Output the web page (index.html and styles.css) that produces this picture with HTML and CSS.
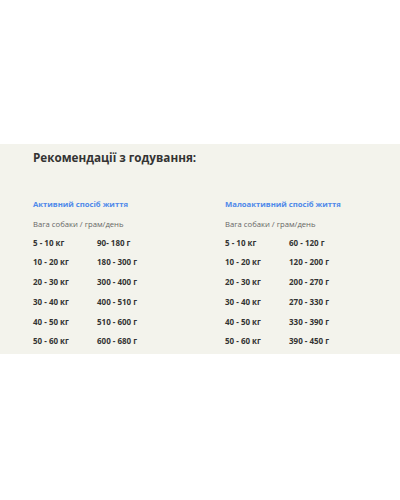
FILE: index.html
```html
<!DOCTYPE html>
<html>
<head>
<meta charset="utf-8">
<link rel="stylesheet" href="styles.css">
</head>
<body>
<div class="top"></div>
<section class="panel">
  <h2 class="title">Рекомендації з годування:</h2>
  <div class="cols">
    <div class="col">
      <div class="head">Активний спосіб життя</div>
      <div class="sub">Вага собаки / грам/день</div>
      <div class="row"><span class="w">5 - 10 кг</span><span>90- 180 г</span></div>
      <div class="row"><span class="w">10 - 20 кг</span><span>180 - 300 г</span></div>
      <div class="row"><span class="w">20 - 30 кг</span><span>300 - 400 г</span></div>
      <div class="row"><span class="w">30 - 40 кг</span><span>400 - 510 г</span></div>
      <div class="row"><span class="w">40 - 50 кг</span><span>510 - 600 г</span></div>
      <div class="row"><span class="w">50 - 60 кг</span><span>600 - 680 г</span></div>
    </div>
    <div class="col">
      <div class="head">Малоактивний спосіб життя</div>
      <div class="sub">Вага собаки / грам/день</div>
      <div class="row"><span class="w">5 - 10 кг</span><span>60 - 120 г</span></div>
      <div class="row"><span class="w">10 - 20 кг</span><span>120 - 200 г</span></div>
      <div class="row"><span class="w">20 - 30 кг</span><span>200 - 270 г</span></div>
      <div class="row"><span class="w">30 - 40 кг</span><span>270 - 330 г</span></div>
      <div class="row"><span class="w">40 - 50 кг</span><span>330 - 390 г</span></div>
      <div class="row"><span class="w">50 - 60 кг</span><span>390 - 450 г</span></div>
    </div>
  </div>
</section>
</body>
</html>
```
FILE: styles.css
```css
html, body {
  margin: 0;
  padding: 0;
  background: #ffffff;
  font-family: "Open Sans", "Noto Sans", sans-serif;
}
.top {
  height: 144px;
}
.panel {
  background: #f3f3ec;
  height: 210px;
  box-sizing: border-box;
  padding: 5px 0 0 33px;
}
.title {
  margin: 0;
  font-size: 11.7px;
  font-weight: 700;
  color: #333333;
  line-height: 16px;
}
.cols {
  display: grid;
  grid-template-columns: 192px 1fr;
  margin-top: 32.5px;
}
.head {
  font-size: 7.7px;
  font-weight: 700;
  color: #4f89ea;
  line-height: 12px;
}
.sub {
  font-size: 7.7px;
  color: #666666;
  line-height: 12px;
  margin-top: 8px;
}
.row {
  display: flex;
  font-size: 8px;
  font-weight: 700;
  color: #333333;
  line-height: 12px;
  margin-top: 7.75px;
}
.sub + .row {
  margin-top: 7px;
}
.w {
  width: 64px;
}
```
